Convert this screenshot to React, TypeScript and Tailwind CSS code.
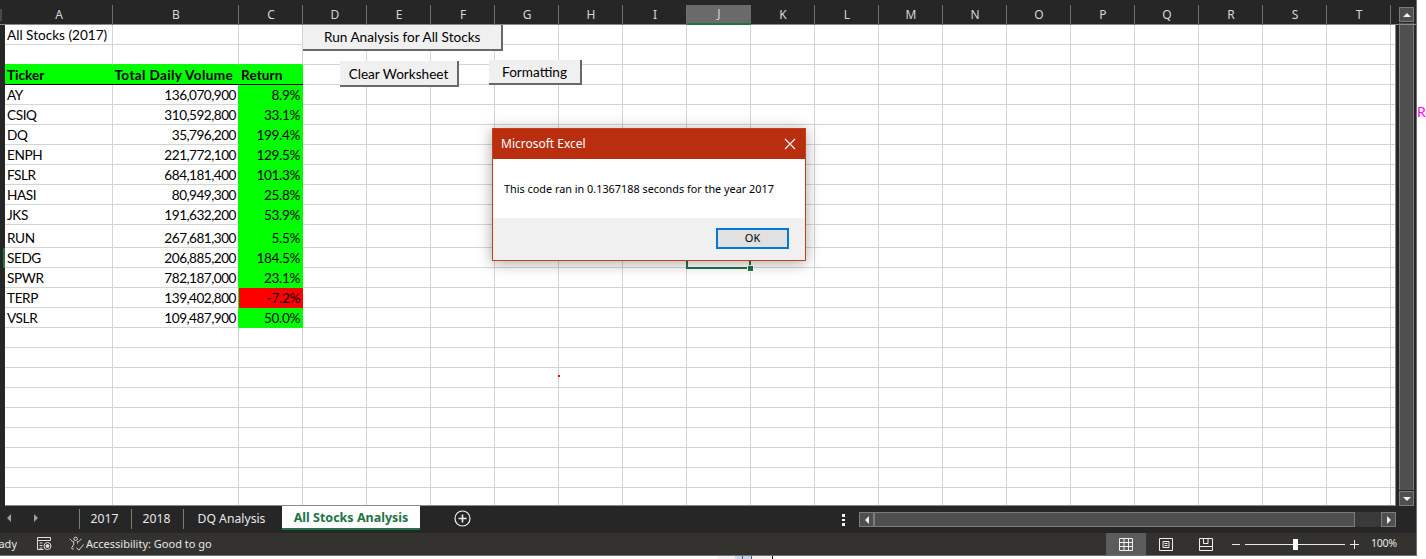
import React from 'react'

const columns = ['A', 'B', 'C', 'D', 'E', 'F', 'G', 'H', 'I', 'J', 'K', 'L', 'M', 'N', 'O', 'P', 'Q', 'R', 'S', 'T']

const stocks = [
  ['AY', '136,070,900', '8.9%'],
  ['CSIQ', '310,592,800', '33.1%'],
  ['DQ', '35,796,200', '199.4%'],
  ['ENPH', '221,772,100', '129.5%'],
  ['FSLR', '684,181,400', '101.3%'],
  ['HASI', '80,949,300', '25.8%'],
  ['JKS', '191,632,200', '53.9%'],
  ['RUN', '267,681,300', '5.5%'],
  ['SEDG', '206,885,200', '184.5%'],
  ['SPWR', '782,187,000', '23.1%'],
  ['TERP', '139,402,800', '-7.2%'],
  ['VSLR', '109,487,900', '50.0%'],
]

const rowGrid = 'grid grid-cols-[108px_126px_repeat(18,64px)_1fr]'
const cell = 'flex items-end border-r border-b border-[#d4d4d4] min-w-0 whitespace-nowrap leading-[17px]'

function EmptyCells({ count }: { count: number }) {
  return (
    <>
      {Array.from({ length: count }).map((_, i) => (
        <div key={i} className={cell} />
      ))}
      <div className="border-b border-[#d4d4d4]" />
    </>
  )
}

function HeaderRow() {
  return (
    <div className="relative h-[25px] shrink-0 pt-[5px] pl-[5px] pr-[21px] border-b border-[#8a8a8a]">
      <div className="absolute left-0 top-[9px] w-[2px] h-[12px] bg-[#4a4a4a]" />
      <div className={`${rowGrid} h-[19px] font-['Noto_Sans',sans-serif] text-[12px] text-[#d6d6d6]`}>
        {columns.map(c => (
          <div
            key={c}
            className={
              c === 'J'
                ? 'flex items-center justify-center bg-[#6a6a6a] border-b-2 border-[#217346]'
                : 'flex items-center justify-center pl-[1px] border-r border-[#6e6e6e]'
            }
          >
            {c}
          </div>
        ))}
      </div>
    </div>
  )
}

function Sheet() {
  return (
    <div className="relative w-[1391px] h-[481px] overflow-hidden bg-white border-r border-b border-[#8a8a8a] font-['Lato',sans-serif] text-[13.6px] text-black">
      <div className={`${rowGrid} h-5`}>
        <div className={`${cell} pl-[2px]`}>All Stocks (2017)</div>
        <EmptyCells count={19} />
      </div>
      <div className={`${rowGrid} h-5`}>
        <div className="border-r border-b border-r-[#d4d4d4] border-b-[#00ff00]" />
        <div className="border-r border-b border-r-[#d4d4d4] border-b-[#00ff00]" />
        <div className="border-r border-b border-r-[#d4d4d4] border-b-[#00ff00]" />
        <EmptyCells count={17} />
      </div>
      <div className={`${rowGrid} h-5`}>
        <div className="flex items-end bg-[#00ff00] border-b border-black pl-[2px] font-bold leading-[18px]">Ticker</div>
        <div className="flex items-end justify-end bg-[#00ff00] border-b border-black pr-[6px] font-bold leading-[18px] tracking-[0.35px] whitespace-nowrap">Total Daily Volume</div>
        <div className="flex items-end bg-[#00ff00] border-b border-black pl-[2px] font-bold leading-[18px] tracking-[0.1px]">Return</div>
        <EmptyCells count={17} />
      </div>
      {stocks.map(([ticker, volume, ret]) => (
        <div key={ticker} className={`${rowGrid} ${ticker === 'RUN' ? 'h-[23px]' : 'h-5'}`}>
          <div className={`${cell} pl-[2px] tracking-[-0.4px]`}>{ticker}</div>
          <div className="flex items-end justify-end border-b border-r border-b-[#d4d4d4] border-r-[#00ff00] pr-[2px] leading-[17px] tracking-[-0.5px]">{volume}</div>
          <div className={`flex items-end justify-end pr-[3px] leading-[19px] tracking-[-0.35px] ${ret.startsWith('-') ? 'bg-[#ff0000]' : 'bg-[#00ff00]'}`}>{ret}</div>
          <EmptyCells count={17} />
        </div>
      ))}
      {Array.from({ length: 9 }).map((_, i) => (
        <div key={i} className={`${rowGrid} h-5`}>
          <EmptyCells count={20} />
        </div>
      ))}

      {/* selected range, only its bottom edge shows under the dialog */}
      <div className="absolute left-[681px] top-[235px] w-[65px] h-[9px] border-x-2 border-b-2 border-[#217346]" />
      <div className="absolute left-[743px] top-[241px] w-[5px] h-[5px] bg-[#217346] outline outline-1 outline-white" />
      <div className="absolute left-[553px] top-[350px] w-[2px] h-[2px] bg-[#ff0000]" />

      <MacroButton className="left-[298px] top-0 w-[200px] h-[26px] pl-[21px] justify-start" label="Run Analysis for All Stocks" />
      <MacroButton className="left-[335px] top-[36px] w-[119px] h-[26px] pt-[2px] justify-center" label="Clear Worksheet" />
      <MacroButton className="left-[484px] top-[35px] w-[93px] h-[25px] pt-[1px] justify-center" label="Formatting" />

      <Dialog />
    </div>
  )
}

function MacroButton({ label, className }: { label: string; className: string }) {
  return (
    <div className={`absolute flex items-center bg-[#f0f0f0] border-r-2 border-b-2 border-[#696969] text-[13.6px] ${className}`}>
      {label}
    </div>
  )
}

function Dialog() {
  return (
    <div className="absolute left-[487px] top-[103px] w-[314px] h-[133px] flex flex-col border border-[#c43e1c] bg-white shadow-[0_2px_14px_rgba(0,0,0,0.35)] font-['Noto_Sans',sans-serif]">
      <div className="h-[30px] shrink-0 flex items-center justify-between bg-[#b82e0f] pl-2 pr-[9px] text-white text-[12px]">
        <span>Microsoft Excel</span>
        <svg width="12" height="12" viewBox="0 0 12 12" fill="none" stroke="white" strokeWidth="1.1">
          <path d="M1 1l10 10M11 1L1 11" />
        </svg>
      </div>
      <div className="h-[59px] shrink-0 flex items-center pl-[11px] pt-[1px] text-[10.85px] text-black">
        This code ran in 0.1367188 seconds for the year 2017
      </div>
      <div className="flex-1 flex items-start justify-end bg-[#f0f0f0] pt-[10px] pr-4">
        <div className="w-[73px] h-[21px] flex items-center justify-center bg-[#e1e1e1] border-2 border-[#0078d7] text-[11px] text-black">
          OK
        </div>
      </div>
    </div>
  )
}

function ScrollButton({ dir, className = '' }: { dir: 'up' | 'down' | 'left' | 'right'; className?: string }) {
  const points = {
    up: 'M2 8L6 4l4 4z',
    down: 'M2 4l4 4 4-4z',
    left: 'M8 2L4 6l4 4z',
    right: 'M4 2l4 4-4 4z',
  }[dir]
  return (
    <div className={`w-[15px] h-[15px] shrink-0 flex items-center justify-center bg-[#4f4f4f] border border-[#7c7c7c] ${className}`}>
      <svg width="12" height="12" viewBox="0 0 12 12" fill="#f0f0f0">
        <path d={points} />
      </svg>
    </div>
  )
}

function Tabs() {
  return (
    <div className="h-[27px] shrink-0 flex items-start bg-[#262626] font-['Noto_Sans',sans-serif] text-[12.2px] text-[#e8e8e8]">
      <div className="w-[79px] h-[23px] flex items-center pl-[5px] gap-[19px]">
        <svg width="8" height="10" viewBox="0 0 8 10" fill="#a0a0a0"><path d="M6 1L2 5l4 4z" /></svg>
        <svg width="8" height="10" viewBox="0 0 8 10" fill="#a0a0a0"><path d="M2 1l4 4-4 4z" /></svg>
      </div>
      <div className="w-[52px] h-[20px] mt-[3px] pr-[2px] flex items-center justify-center border-l border-[#7a7a7a]">2017</div>
      <div className="w-[52px] h-[20px] mt-[3px] pr-[2px] flex items-center justify-center border-l border-[#7a7a7a]">2018</div>
      <div className="w-[99px] h-[20px] mt-[3px] pr-[3px] flex items-center justify-center border-l border-[#7a7a7a]">DQ Analysis</div>
      <div className="w-[138px] h-[25px] -mt-px pt-[3px] flex items-center justify-center bg-white border-b-2 border-[#217346] font-bold text-[12.5px] text-[#217346]">
        All Stocks Analysis
      </div>
      <svg className="ml-[34px] mt-[4px]" width="17" height="17" viewBox="0 0 17 17" fill="none" stroke="#f0f0f0">
        <circle cx="8.5" cy="8.5" r="7.5" strokeWidth="1.2" />
        <path d="M8.5 4.5v8M4.5 8.5h8" strokeWidth="1.6" />
      </svg>
      <div className="ml-[371px] mt-[8px] w-[3px] flex flex-col gap-[2px]">
        <div className="h-[2.5px] bg-white" />
        <div className="h-[2.5px] bg-white" />
        <div className="h-[2.5px] bg-white" />
      </div>
      <div className="ml-[14px] mt-[6px] w-[537px] h-[15px] flex bg-[#3a3a3a]">
        <ScrollButton dir="left" />
        <div className="w-[481px] bg-[#4f4f4f] border border-[#7c7c7c]" />
        <div className="flex-1" />
        <ScrollButton dir="right" />
      </div>
    </div>
  )
}

function StatusBar() {
  return (
    <div className="h-[22px] shrink-0 flex items-center bg-[#33322f] font-['Noto_Sans',sans-serif] text-[11px] text-[#e8e8e8]">
      <div className="w-[17px] pt-[1px] overflow-hidden flex justify-end">
        <span>Ready</span>
      </div>
      <svg className="ml-[20px]" width="15" height="14" viewBox="0 0 15 14" fill="none" stroke="#e0e0e0">
        <path d="M.5.5h13v3H.5zM.5 3.5v9h6" />
        <path d="M2.5 6h3M2.5 8.5h3M2.5 11h3" />
        <circle cx="10.5" cy="9" r="3.5" />
        <circle cx="10.5" cy="9" r="1.5" fill="#e0e0e0" />
      </svg>
      <svg className="ml-[17px]" width="16" height="16" viewBox="0 0 17 16" fill="none" stroke="#e0e0e0">
        <circle cx="7" cy="2.5" r="1.8" />
        <path d="M1 2.5c1 2 3 3 4 3v3L3 12c-.5 1.5 1 2 2 1M13 2.5c-1 2-3 3-4 3v2" />
        <path d="M8 12l2.5 2.5L15.5 8.5" />
      </svg>
      <span className="ml-[1px] pt-[1px] w-[131px] text-[11px]">Accessibility: Good to go</span>
      <div className="ml-[889px] w-[40px] h-full flex items-center justify-center bg-[#5c5c5c]">
        <svg width="14" height="13" viewBox="0 0 14 13" fill="none" stroke="#f0f0f0">
          <path d="M.5.5h13v12H.5zM.5 4.5h13M.5 8.5h13M5 .5v12M9.5 .5v12" />
        </svg>
      </div>
      <div className="w-[40px] flex justify-center">
        <svg width="14" height="13" viewBox="0 0 14 13" fill="none" stroke="#f0f0f0">
          <path d="M.5.5h13v12H.5zM4 3.5h6v6H4zM5.5 5.5h3M5.5 7.5h3" />
        </svg>
      </div>
      <div className="w-[40px] flex justify-center">
        <svg width="14" height="13" viewBox="0 0 14 13" fill="none" stroke="#f0f0f0">
          <path d="M.5.5h13v12H.5zM4.5.5v5h4.5v-5M.5 8.5h13" />
        </svg>
      </div>
      <div className="ml-[6px] w-[8px] h-px bg-[#e8e8e8]" />
      <div className="relative ml-[5px] w-[100px] h-px bg-[#e8e8e8]">
        <div className="absolute left-[48px] -top-[5px] w-[5px] h-[11px] bg-white" />
      </div>
      <svg className="ml-[5px]" width="9" height="9" viewBox="0 0 9 9" stroke="#e8e8e8"><path d="M0 4.5h9M4.5 0v9" /></svg>
      <span className="ml-[12px] text-[10.6px] tracking-[-0.3px]">100%</span>
    </div>
  )
}

export default function App() {
  return (
    <div className="w-[1426px] h-[559px] flex flex-col overflow-hidden bg-white">
      <div className="h-[556px] flex shrink-0">
        <div className="w-[1417px] h-full flex flex-col bg-[#262626] border-r border-b border-[#6e6e6e]">
          <HeaderRow />
          <div className="h-[481px] shrink-0 flex">
            <div className="relative w-[5px] shrink-0 bg-[#262626]">
              <div className="absolute left-[3px] top-[223px] w-[2px] h-[20px] bg-[#217346]" />
            </div>
            <Sheet />
            <div className="ml-[3px] w-[15px] h-[499px] flex flex-col -mt-[18px]">
              <ScrollButton dir="up" />
              <div className="flex-1 mt-px mb-px bg-[#4f4f4f] border-x border-[#7c7c7c]" />
              <ScrollButton dir="down" />
            </div>
          </div>
          <Tabs />
          <StatusBar />
        </div>
        <div className="flex-1 overflow-hidden pt-[101px] font-['Lato',sans-serif] text-[14px] text-[#ff00ff]">Re</div>
      </div>
      <div className="h-[3px] flex">
        <div className="ml-[717px] w-[18px] bg-[#f2f2f2]" />
        <div className="w-[7px] bg-[#c5d9f1]" />
        <div className="w-px bg-[#555555]" />
        <div className="w-[8px] bg-[#c5d9f1]" />
        <div className="w-px bg-[#555555]" />
        <div className="w-[20px] bg-[#f2f2f2]" />
        <div className="w-px bg-black" />
      </div>
    </div>
  )
}
